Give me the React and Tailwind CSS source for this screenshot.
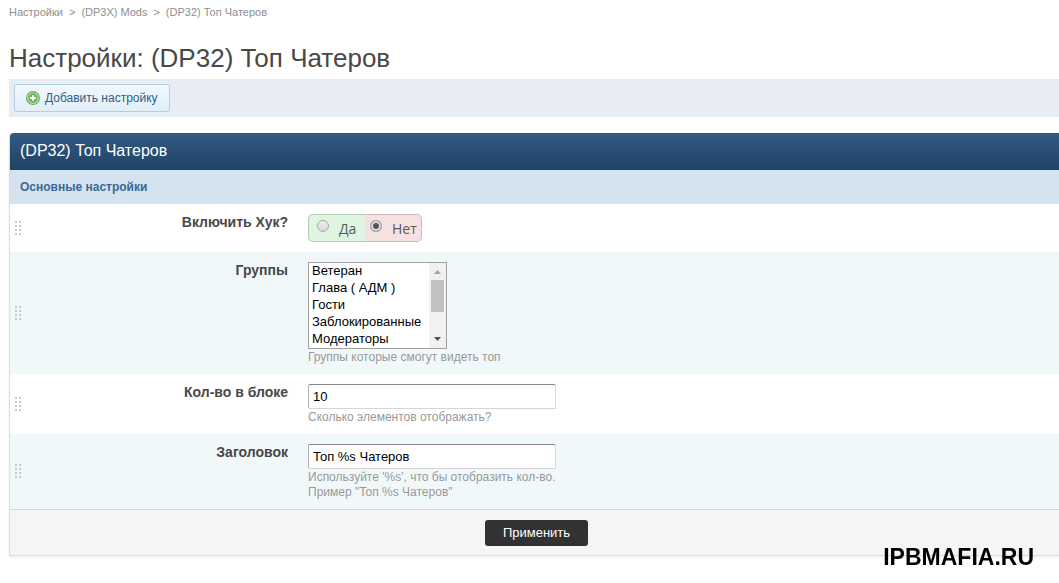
import React, { useState } from "react";

const groups = [
  "Ветеран",
  "Глава ( АДМ )",
  "Гости",
  "Заблокированные",
  "Модераторы",
  "Новички",
  "Пользователи",
  "Проверенные",
  "Редакторы",
  "Администраторы",
];

const AddIcon = () => (
  <svg className="w-[14px] h-[14px] shrink-0" viewBox="0 0 14 14" aria-hidden="true">
    <circle cx="7" cy="7" r="6.4" fill="#d3ebc9" stroke="#6aa35f" strokeWidth="1.1" />
    <circle cx="7" cy="7" r="4.900" fill="#6fb85a" />
    <path d="M7 4.200v5.600M4.200 7h5.600" stroke="#fff" strokeWidth="1.800" />
  </svg>
);

const DragHandle = () => (
  <svg className="w-[7px] h-[15px]" viewBox="0 0 7 15" fill="#c8c8c8" aria-hidden="true">
    {[0, 4, 8, 12].map((y) => (
      <g key={y}>
        <rect x="0" y={y} width="2" height="2" />
        <rect x="4" y={y} width="2" height="2" />
      </g>
    ))}
  </svg>
);

const Hint = ({ children }) => (
  <p className="pt-px text-[12px] leading-[15px] text-[#999] whitespace-pre-line">{children}</p>
);

const Row = ({ label, htmlFor, labelId, className = "", children }) => (
  <div className={`flex pl-[5px] ${className}`}>
    <div className="w-[14px] shrink-0 flex items-center">
      <DragHandle />
    </div>
    <div className="w-[259px] shrink-0 pt-[10px] text-right text-[14px] leading-[17px] font-bold text-[#484848]">
      {htmlFor ? <label htmlFor={htmlFor}>{label}</label> : <span id={labelId}>{label}</span>}
    </div>
    <div className="flex-1 min-w-0 pl-5 pt-[10px] pb-[9px]">{children}</div>
  </div>
);

const radioClass =
  "appearance-none w-3 h-3 mb-1 rounded-full border border-[#a8a8a8] bg-gradient-to-b from-[#ededed] to-[#dcdcdc] checked:bg-none checked:bg-[#555] checked:shadow-[inset_0_0_0_2px_#e4e4e4]";

const inputClass =
  "block w-[248px] h-[25px] border border-[#d5d5d5] border-t-[#848484] border-l-[#b0b0b0] rounded-[2px] bg-white px-1 text-[13px] text-black";

const App = () => {
  const [enabled, setEnabled] = useState("no");
  const [count, setCount] = useState("10");
  const [title, setTitle] = useState("Топ %s Чатеров");

  return (
    <div className="bg-white pl-[9px] pt-1 pb-7 overflow-x-hidden font-['Liberation_Sans',Arial,sans-serif]">
      {/* Breadcrumbs */}
      <nav className="flex gap-[6px] text-[11px] leading-4 text-[#8e8e8e]">
        <a href="#settings">Настройки</a>
        <span>&gt;</span>
        <a href="#mods">(DP3X) Mods</a>
        <span>&gt;</span>
        <span>(DP32) Топ Чатеров</span>
      </nav>

      <h1 className="mt-[22px] text-[26px] leading-8 text-[#484848]">
        Настройки: (DP32) Топ Чатеров
      </h1>

      {/* Toolbar */}
      <div className="mt-[5px] flex bg-[#e8edf5] px-[5px] py-[5px]">
        <button
          type="button"
          className="flex items-center gap-[5px] h-7 px-[11px] rounded-[2px] border border-[#b4cfe3] bg-gradient-to-b from-[#f0f8fd] to-[#e1eff8] text-[12px] text-[#2f5f86]"
        >
          <AddIcon />
          Добавить настройку
        </button>
      </div>

      {/* Settings */}
      <form
        className="mt-4 border-l border-b border-[#d5dde5] rounded-tl-[4px] shadow-[0_2px_3px_rgba(0,0,0,0.05)]"
        onSubmit={(e) => e.preventDefault()}
      >
        <h2 className="rounded-tl-[4px] bg-gradient-to-b from-[#325a82] to-[#1f4366] px-[10px] pb-[2px] text-[16px] leading-[35px] text-white">
          (DP32) Топ Чатеров
        </h2>
        <h3 className="bg-[#d5e3f1] px-[10px] text-[12px] leading-[34px] font-bold text-[#396894]">
          Основные настройки
        </h3>

        <Row label="Включить Хук?" labelId="hook-label">
          <div
            role="radiogroup"
            aria-labelledby="hook-label"
            className="flex w-[114px] h-7 mb-px font-['Open_Sans',sans-serif] text-[14px] text-[#5a5a5a]"
          >
            <label className="flex items-center w-[57px] pl-2 gap-[10px] rounded-l-[5px] border border-r-0 border-[#b5cdb5] bg-[#dff5e2]">
              <input
                type="radio"
                name="hook"
                className={radioClass}
                checked={enabled === "yes"}
                onChange={() => setEnabled("yes")}
              />
              Да
            </label>
            <label className="flex items-center w-[57px] pl-[5px] gap-[10px] rounded-r-[5px] border border-l-0 border-[#d3bab8] bg-[#f6e1e1]">
              <input
                type="radio"
                name="hook"
                className={radioClass}
                checked={enabled === "no"}
                onChange={() => setEnabled("no")}
              />
              Нет
            </label>
          </div>
        </Row>

        <Row label="Группы" htmlFor="groups" className="bg-[#f1f8fa]">
          <div className="relative w-[139px]">
            <select
              id="groups"
              multiple
              size={5}
              className="block w-full h-[87px] border border-[#a0a0a0] bg-white pl-[1px] text-[13px] leading-4 text-black [scrollbar-width:none]"
            >
              {groups.map((g) => (
                <option key={g} className="h-[17px] min-h-0 p-0 px-[2px]">
                  {g}
                </option>
              ))}
            </select>
            {/* scrollbar */}
            <div
              aria-hidden="true"
              className="pointer-events-none absolute right-px inset-y-px w-[17px] flex flex-col items-center justify-between bg-[#f1f1f1] py-[7px]"
            >
              <svg className="w-[7px] h-1" viewBox="0 0 7 4" fill="#a3a3a3">
                <path d="M3.500 0L7 4H0z" />
              </svg>
              <div className="absolute top-[17px] w-[13px] h-8 bg-[#c1c1c1]" />
              <svg className="w-[7px] h-1" viewBox="0 0 7 4" fill="#505050">
                <path d="M3.500 4L0 0h7z" />
              </svg>
            </div>
          </div>
          <Hint>Группы которые смогут видеть топ</Hint>
        </Row>

        <Row label="Кол-во в блоке" htmlFor="count">
          <input
            id="count"
            type="text"
            value={count}
            onChange={(e) => setCount(e.target.value)}
            className={inputClass}
          />
          <Hint>Сколько элементов отображать?</Hint>
        </Row>

        <Row label="Заголовок" htmlFor="title" className="bg-[#f1f8fa]">
          <input
            id="title"
            type="text"
            value={title}
            onChange={(e) => setTitle(e.target.value)}
            className={inputClass}
          />
          <Hint>{"Используйте '%s', что бы отобразить кол-во.\nПример \"Топ %s Чатеров\""}</Hint>
        </Row>

        <div className="flex justify-center bg-[#f5f5f5] border-t border-[#d0d5e0] pl-1 pt-[10px] pb-[9px]">
          <button
            type="submit"
            className="h-[26px] px-[18px] rounded-[3px] bg-[#323232] text-[13px] text-white"
          >
            Применить
          </button>
        </div>
      </form>

      <div className="fixed right-[25px] bottom-3 text-[23px] leading-7 font-bold text-black">
        IPBMAFIA.RU
      </div>
    </div>
  );
};

export default App;
